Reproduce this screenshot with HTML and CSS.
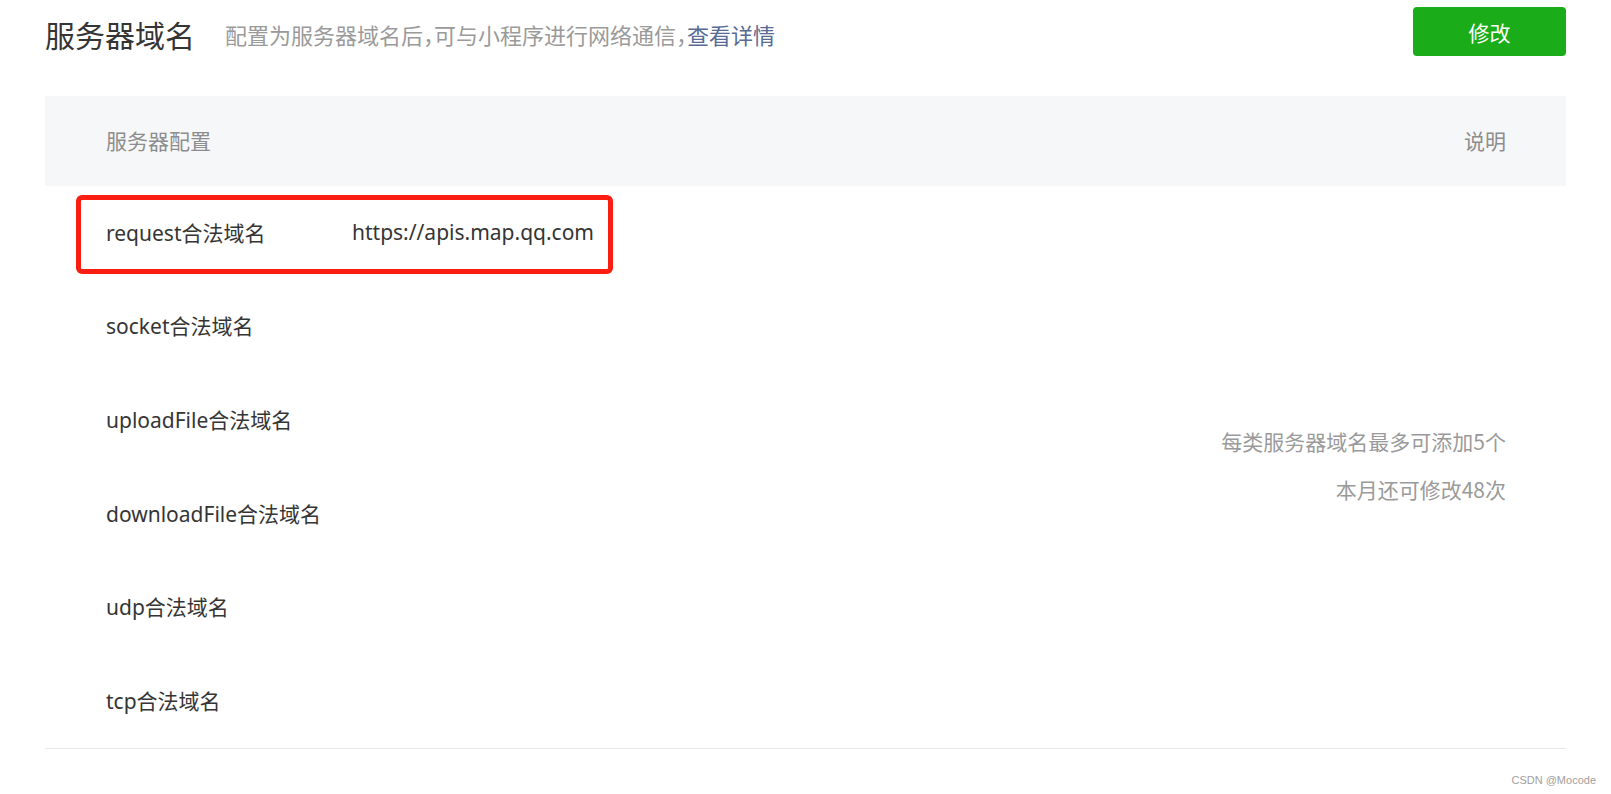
FILE: index.html
```html
<!DOCTYPE html>
<html lang="zh-CN">
<head>
<meta charset="utf-8">
<title>服务器域名</title>
<link rel="stylesheet" href="styles.css">
</head>
<body>
<div class="page">
  <div class="top">
    <div class="top-left">
      <h2 class="title">服务器域名</h2>
      <span class="sub">配置为服务器域名后，可与小程序进行网络通信，<a class="link" href="#">查看详情</a></span>
    </div>
    <button class="btn">修改</button>
  </div>

  <div class="table">
    <div class="thead">
      <span class="th">服务器配置</span>
      <span class="th">说明</span>
    </div>
    <div class="tbody">
      <div class="rows">
        <div class="row"><span class="label">request合法域名</span><span class="value">https://apis.map.qq.com</span></div>
        <div class="row"><span class="label">socket合法域名</span><span class="value"></span></div>
        <div class="row"><span class="label">uploadFile合法域名</span><span class="value"></span></div>
        <div class="row"><span class="label">downloadFile合法域名</span><span class="value"></span></div>
        <div class="row"><span class="label">udp合法域名</span><span class="value"></span></div>
        <div class="row"><span class="label">tcp合法域名</span><span class="value"></span></div>
      </div>
      <div class="desc">
        <p class="desc-line">每类服务器域名最多可添加5个</p>
        <p class="desc-line">本月还可修改48次</p>
      </div>
    </div>
    <div class="mark"></div>
  </div>

  <div class="footer">CSDN @Mocode</div>
</div>
</body>
</html>
```

FILE: styles.css
```css
* { box-sizing: border-box; }

html, body {
  margin: 0;
  padding: 0;
  background: #ffffff;
}

body {
  font-family: "Noto Sans", "Noto Sans CJK SC", sans-serif;
  color: #353535;
}

.page {
  padding: 7px 45px 0 45px;
  width: 1611px;
  height: 794px;
  overflow: hidden;
}

.top {
  display: flex;
  align-items: center;
  justify-content: space-between;
  height: 49px;
}

.top-left {
  display: flex;
  align-items: center;
  gap: 30px;
  padding-top: 5px;
}

.title {
  margin: 0;
  font-size: 30px;
  font-weight: 400;
  color: #353535;
  line-height: 40px;
  font-family: "Noto Sans CJK SC", sans-serif;
}

.sub {
  font-size: 22px;
  color: #9a9a9a;
  line-height: 30px;
  font-family: "Noto Sans CJK SC", sans-serif;
  font-feature-settings: "halt";
}

.link {
  color: #576b95;
  text-decoration: none;
}

.btn {
  width: 153px;
  height: 49px;
  border: none;
  border-radius: 4px;
  background: #1aad19;
  color: #ffffff;
  font-size: 21px;
  font-family: "Noto Sans CJK SC", sans-serif;
  padding: 0;
  cursor: pointer;
}

.table {
  position: relative;
  margin-top: 40px;
  border-bottom: 1px solid #e7e7eb;
}

.thead {
  display: flex;
  justify-content: space-between;
  align-items: center;
  height: 90px;
  padding: 0 60px 2px 61px;
  background: #f6f7f9;
}

.th {
  font-size: 21px;
  color: #8d8d8d;
  font-family: "Noto Sans CJK SC", sans-serif;
}

.tbody {
  display: flex;
  padding: 0 60px 0 61px;
}

.rows {
  flex: 1;
}

.row {
  display: flex;
  align-items: center;
  height: 93.67px;
  padding-bottom: 2px;
  font-size: 21px;
}

.label {
  width: 246px;
  flex-shrink: 0;
}

.value {
  color: #353535;
}

.desc {
  display: flex;
  flex-direction: column;
  justify-content: center;
  align-items: flex-end;
  padding-bottom: 4px;
}

.desc-line {
  margin: 0;
  font-size: 21px;
  line-height: 48px;
  color: #9a9a9a;
  font-family: "Noto Sans CJK SC", sans-serif;
}

.mark {
  position: absolute;
  left: 31px;
  top: 99px;
  width: 537px;
  height: 79px;
  border: 5px solid #fa1d12;
  border-radius: 6px;
  pointer-events: none;
}

.footer {
  text-align: right;
  margin-right: -30px;
  margin-top: 25px;
  font-family: "Liberation Sans", Arial, sans-serif;
  font-size: 11px;
  color: #a0a0a0;
}
```
